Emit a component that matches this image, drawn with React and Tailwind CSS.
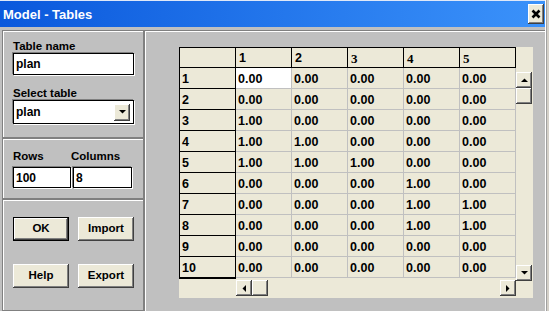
import React from "react";

const data = [
  ["0.00", "0.00", "0.00", "0.00", "0.00"],
  ["0.00", "0.00", "0.00", "0.00", "0.00"],
  ["1.00", "0.00", "0.00", "0.00", "0.00"],
  ["1.00", "1.00", "0.00", "0.00", "0.00"],
  ["1.00", "1.00", "1.00", "0.00", "0.00"],
  ["0.00", "0.00", "0.00", "1.00", "0.00"],
  ["0.00", "0.00", "0.00", "1.00", "1.00"],
  ["0.00", "0.00", "0.00", "1.00", "1.00"],
  ["0.00", "0.00", "0.00", "0.00", "0.00"],
  ["0.00", "0.00", "0.00", "0.00", "0.00"],
];

const raised =
  "bg-[#ece9d8] shadow-[inset_-1px_-1px_0_#404040,inset_1px_1px_0_#ffffff,inset_-2px_-2px_0_#808080]";

function Tri({ dir }) {
  const pts = {
    up: "0,4 7,4 3.5,0.5",
    down: "0,0 7,0 3.5,3.5",
    left: "4,0 4,7 0.5,3.5",
    right: "0,0 0,7 3.5,3.5",
  }[dir];
  const vert = dir === "up" || dir === "down";
  return (
    <svg width={vert ? 7 : 4} height={vert ? 4 : 7} viewBox={vert ? "0 0 7 4" : "0 0 4 7"}>
      <polygon points={pts} fill="#000" />
    </svg>
  );
}

function ScrollBtn({ dir }) {
  return (
    <div className={`w-[16px] h-[16px] flex items-center justify-center ${raised}`}>
      <Tri dir={dir} />
    </div>
  );
}

function Button({ children, def }) {
  return (
    <div
      className={`w-[56px] h-[24px] flex items-center justify-center text-[11.5px] font-bold text-black ${
        def ? "border border-black " : ""
      }${raised}`}
    >
      {children}
    </div>
  );
}

const inputCls =
  "bg-white border border-black shadow-[-1px_-1px_0_#808080,1px_1px_0_#ffffff] flex items-center pl-[2px] text-[12px] font-bold text-black";

const section =
  "border border-[#808080] shadow-[inset_1px_1px_0_#ffffff]";

export default function App() {
  return (
    <div className="w-[549px] h-[311px] bg-[#c0c0c0] overflow-hidden flex font-['Liberation_Sans',Arial,sans-serif] text-black">
      <div className="w-[545px] flex flex-col">
        {/* Title bar */}
        <div className="h-[27px] border-t border-[#dfe8f8] bg-linear-to-r from-[#0a58dc] to-[#3b92fa] flex items-center pl-[3px] pr-[1px]">
          <span className="text-white font-bold text-[13px] leading-none">Model - Tables</span>
          <div className="flex-1" />
          <div className={`w-[16px] h-[20px] flex items-center justify-center ${raised}`}>
            <svg width="10" height="10" viewBox="0 0 10 10">
              <path d="M1.5 1.5 L8.5 8.5 M8.5 1.5 L1.5 8.5" stroke="#000" strokeWidth="2.6" />
            </svg>
          </div>
        </div>

        {/* Body */}
        <div className="flex-1 flex pt-[3px] pl-[2px]">
          {/* Left column */}
          <div className="w-[142px] flex flex-col">
            <div className={`${section} h-[108px] pl-[10px] pt-[8px]`}>
              <div className="h-[14px] leading-[14px] text-[11.5px] font-bold">Table name</div>
              <div className={`${inputCls} w-[121px] h-[22px]`}>plan</div>
              <div className="mt-[11px] h-[14px] leading-[14px] text-[11.5px] font-bold">Select table</div>
              <div className={`${inputCls} w-[121px] h-[24px] pr-[3px]`}>
                <span className="flex-1">plan</span>
                <div className={`w-[16px] h-[17px] flex items-center justify-center ${raised}`}>
                  <Tri dir="down" />
                </div>
              </div>
            </div>
            <div className={`${section} h-[61px] pl-[10px] pt-[10px]`}>
              <div className="flex h-[14px] leading-[14px] text-[11.5px] font-bold">
                <span className="w-[58px]">Rows</span>
                <span>Columns</span>
              </div>
              <div className="flex gap-[2px] mt-[4px]">
                <div className={`${inputCls} w-[58px] h-[21px] text-[11.5px]`}>100</div>
                <div className={`${inputCls} w-[59px] h-[21px] text-[11.5px]`}>8</div>
              </div>
            </div>
            <div className={`${section} flex-1 pl-[10px] pt-[17px]`}>
              <div className="flex gap-[9px]">
                <Button def>OK</Button>
                <Button>Import</Button>
              </div>
              <div className="flex gap-[9px] mt-[23px]">
                <Button>Help</Button>
                <Button>Export</Button>
              </div>
            </div>
          </div>

          {/* Right panel */}
          <div className="flex-1 border-l border-t border-[#808080] shadow-[inset_1px_1px_0_#ffffff] pl-[34px] pt-[16px]">
            <div className="w-[354px] h-[251px] bg-[#ece9d8] flex">
              <div className="w-[337px] flex flex-col">
                {/* header */}
                <div className="flex h-[21px] border-t border-b border-black">
                  <div className="w-[57px] border-l border-r border-black" />
                  {["1", "2", "3", "4", "5"].map((h, i) => (
                    <div
                      key={h}
                      className={`w-[56px] border-r border-black flex items-center pl-[3px] pt-[1px] font-bold leading-none ${
                        i >= 2 ? "font-['Liberation_Serif',serif] text-[13px]" : "text-[12.5px]"
                      }`}
                    >
                      {h}
                    </div>
                  ))}
                </div>
                {data.map((row, r) => (
                  <div key={r} className={`flex ${r === 9 ? "h-[22px]" : "h-[21px]"}`}>
                    <div
                      className={`w-[57px] border-l border-r border-black ${
                        r === 9 ? "border-b-2" : "border-b"
                      } border-b-black flex items-center pl-[2px] pt-[2px] text-[12.5px] font-bold leading-none`}
                    >
                      {r + 1}
                    </div>
                    {row.map((v, c) => (
                      <div
                        key={c}
                        className={`w-[56px] border-r border-b border-[#c0c0c0] flex items-center pl-[2px] pt-[2px] text-[12.5px] font-bold leading-none ${
                          r === 0 && c === 0 ? "bg-white" : ""
                        } ${r === 9 ? "mb-[1px]" : ""}`}
                      >
                        {v}
                      </div>
                    ))}
                  </div>
                ))}
                {/* horizontal scrollbar */}
                <div className="flex pl-[57px] pt-[1px]">
                  <ScrollBtn dir="left" />
                  <div className={`w-[16px] h-[16px] ${raised}`} />
                  <div className="flex-1" />
                  <ScrollBtn dir="right" />
                </div>
              </div>
              {/* vertical scrollbar */}
              <div className="w-[17px] flex flex-col pt-[25px] pb-[17px]">
                <ScrollBtn dir="up" />
                <div className={`w-[16px] h-[16px] ${raised}`} />
                <div className="flex-1" />
                <ScrollBtn dir="down" />
              </div>
            </div>
          </div>
        </div>
      </div>
      <div className="w-[4px] border-l border-[#ffffff] bg-[#d4d0c8] shadow-[inset_1px_0_0_#a0a0a0]" />
    </div>
  );
}
